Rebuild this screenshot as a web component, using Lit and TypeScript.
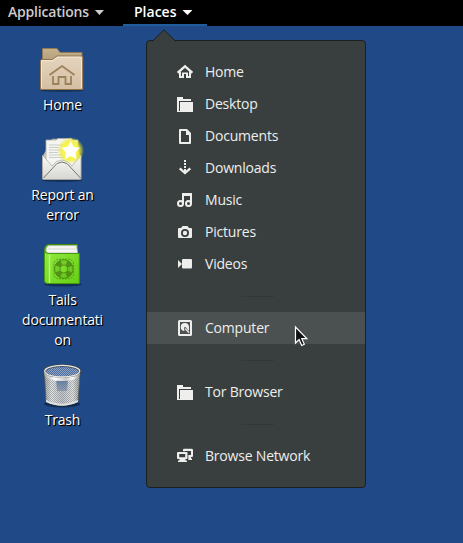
import { LitElement, html, svg, css } from "lit";
import { customElement, property } from "lit/decorators.js";
import { classMap } from "lit/directives/class-map.js";

const glyphs: Record<string, unknown> = {
  home: svg`<path d="M.6 8.800 8 2.300l7.400 6.500" fill="none" stroke="#eeeeec" stroke-width="2.200"/><path d="M2 8.500V14h5v-4h2v4h5V8.500l-2-1.500v5h-1V8.500H5V12H4V7z"/>`,
  folder: svg`<path d="M0 1h6v2h8v2H2v10H0z"/><path d="M3 6h13v10H0v-1h3z"/>`,
  document: svg`<path fill-rule="evenodd" d="M3 1h7l4 4v10q0 1-1 1H3q-1 0-1-1V2q0-1 1-1zM4 3v11h8V7H9V3z"/>`,
  download: svg`<path d="M7 0h2v2H7zM7 3h2v2H7zM7 6h2v2H7zM7 9h2v3H7z"/><path d="M2.700 8.300l5.300 4.700 5.300-4.700" fill="none" stroke="#eeeeec" stroke-width="2.300"/>`,
  music: svg`<path d="M5 1h10v11h-2V4H7v8H5z"/><circle cx="3.500" cy="11.500" r="2.500" fill="none" stroke="#eeeeec" stroke-width="2"/><circle cx="11.500" cy="11.500" r="2.500" fill="none" stroke="#eeeeec" stroke-width="2"/>`,
  camera: svg`<path fill-rule="evenodd" d="M2 4h2l1.500-2h5L12 4h2q1 0 1 1v8q0 1-1 1H2q-1 0-1-1V5q0-1 1-1zM8 5a4 4 0 1 0 0 8 4 4 0 0 0 0-8z"/><circle cx="8" cy="9" r="2.200"/>`,
  video: svg`<path d="M1 4l4 4-4 4z"/><rect x="5" y="3" width="10" height="9.500" rx="1"/>`,
  disk: svg`<path fill-rule="evenodd" d="M2.500 0h11Q15 0 15 1.500v13q0 1.500-1.500 1.500h-11Q1 16 1 14.500v-13Q1 0 2.500 0zM3 2v12h10V2z"/><path d="M8 3a4 4 0 1 0-.5 8L7 7.500 8.500 7l3.500 4V7.500A4 4 0 0 0 8 3z"/><path d="M8.300 8.500l3.700 4.200" fill="none" stroke="#eeeeec" stroke-width="1.300"/>`,
  network: svg`<path d="M7 .8h7.500Q16 .8 16 2v6q0 1-1 1h-1v1.500h1V12h-3.700V7H14V3H8v.200H6V2Q6 .8 7 .8z"/><path fill-rule="evenodd" d="M1 4h8.500q1 0 1 1v5q0 1-1 1H8.500v1.500H10V14H1v-1.500h1.500V11H1q-1 0-1-1V5q0-1 1-1zM2.200 6v3.200h6V6z"/>`,
};

const star = "M32.700 6 35.500 11.800 42 12.700 37.400 17.400 38.400 24 32.700 21 27 24 28 17.400 23.400 12.700 29.900 11.800z";

const pictures: Record<string, unknown> = {
  home: svg`
    <defs>
      <linearGradient id="hb" x2="0" y2="1"><stop stop-color="#c5b18d"/><stop offset="1" stop-color="#a8946e"/></linearGradient>
      <linearGradient id="hf" x2="0" y2="1"><stop stop-color="#e6d4be"/><stop offset="1" stop-color="#d4bfa3"/></linearGradient>
    </defs>
    <ellipse cx="24" cy="45.500" rx="22" ry="1.500" fill="#000" opacity=".3"/>
    <path d="M4.500 24V3.500H19l3 4h22V24z" fill="url(#hb)" stroke="#8f7a52"/>
    <path d="M2.500 44.500V16q0-1.500 1.500-1.500h10.500l4.500-3.500h24q1.700 0 1.700 1.500v32z" fill="url(#hf)" stroke="#8f7348"/>
    <path d="M3.500 43V15.700h11.500l4.500-3.500h24V43" fill="none" stroke="#f5eadb" stroke-width=".9"/>
    <path d="M11.500 30 24 21l12.500 9M15 31v8h5.500v-7h7v7H33v-8" fill="none" stroke="#9b805b" stroke-width="1.800"/>`,
  report: svg`
    <defs>
      <linearGradient id="ep" x2="0" y2="1"><stop stop-color="#fbfbf8"/><stop offset="1" stop-color="#d6d6d2"/></linearGradient>
      <radialGradient id="eg"><stop offset=".35" stop-color="#fff84a"/><stop offset=".7" stop-color="#f4ee22" stop-opacity=".75"/><stop offset="1" stop-color="#e6e82a" stop-opacity="0"/></radialGradient>
    </defs>
    <ellipse cx="24" cy="45.500" rx="20" ry="1.500" fill="#000" opacity=".35"/>
    <path d="M4.500 22 14 4h20l9 18v22H4.500z" fill="#d0d0cb" stroke="#8e8e88" stroke-width=".8"/>
    <path d="M8 5h10l2-1.500h13L35 5h5v34H8z" fill="#f5f5f1" stroke="#aaaaa4" stroke-width=".8"/>
    <path d="M11 10h13M11 12.500h10M11 15h12M11 17.500h9M11 20h13M11 22.500h15" stroke="#c2c2be" stroke-width=".8"/>
    <path d="M4.500 20 14 31q4-6 10-6t10 6l9-11v23q0 1.500-1.500 1.500H6q-1.500 0-1.500-1.500z" fill="url(#ep)" stroke="#a6a6a0" stroke-width=".7"/>
    <path d="M5.500 43 19 28.500q5-3 10 0L42.500 43" fill="none" stroke="#777772" stroke-width="1"/>
    <circle cx="32.700" cy="15.500" r="13.500" fill="url(#eg)"/>
    <path d="${star}" fill="#fff"/>`,
  book: svg`
    <defs>
      <linearGradient id="bk" x2="1" y2="1"><stop stop-color="#92ea40"/><stop offset="1" stop-color="#66cf14"/></linearGradient>
    </defs>
    <ellipse cx="25" cy="44.500" rx="19" ry="2" fill="#000" opacity=".35"/>
    <path d="M6.500 11Q6.500 4.500 11 4.500h28.500V40H6.500z" fill="#68c81a" stroke="#3f8d08"/>
    <path d="M8 11Q8 5.500 12 5.500h26.500l1.200 7.500H9z" fill="#f4f4f1" stroke="#a5aaa0" stroke-width=".6"/>
    <path d="M10 9h28" stroke="#d0d0cb" stroke-width=".7"/>
    <path d="M6.500 10q0 3.500 4 3.500h30.800v30H9.500q-3 0-3-3z" fill="url(#bk)" stroke="#459b0b"/>
    <path d="M11.500 14.500v28.500" stroke="#b8f77e" stroke-width="1.500"/>
    <g fill="none" stroke="#4c8b14">
      <circle cx="25.800" cy="29" r="6.800" stroke-width="5" opacity=".2"/>
      <circle cx="25.800" cy="29" r="6.800" stroke-width="5.500" stroke-dasharray="5.340 5.340" stroke-dashoffset="-2.670" opacity=".85"/>
      <circle cx="25.800" cy="29" r="4" stroke-width=".9"/>
      <circle cx="25.800" cy="29" r="9.300" stroke-width=".9"/>
      <rect x="16" y="19.200" width="19.600" height="19.600" rx="5" stroke-width=".8" stroke-dasharray="2 1"/>
    </g>`,
  trash: svg`
    <defs>
      <linearGradient id="tb"><stop stop-color="#a5a8a5"/><stop offset=".2" stop-color="#e6e7e4"/><stop offset=".5" stop-color="#c3c7cb"/><stop offset=".8" stop-color="#e8e8e5"/><stop offset="1" stop-color="#9a9c98"/></linearGradient>
      <pattern id="tm" width="2" height="2" patternUnits="userSpaceOnUse"><path d="M0 0h1v1H0zM1 1h1v1H1z" fill="#727a84"/></pattern>
      <pattern id="tl" width="2" height="2" patternUnits="userSpaceOnUse"><path d="M0 0h1v1H0zM1 1h1v1H1z" fill="#c0c8d2"/></pattern>
      <linearGradient id="tc" x2="0" y2="1"><stop stop-color="#2c5797" stop-opacity=".75"/><stop offset="1" stop-color="#5c7dac" stop-opacity=".5"/></linearGradient>
      <linearGradient id="tr"><stop stop-color="#a9aba7"/><stop offset=".3" stop-color="#fff"/><stop offset=".6" stop-color="#c9cac6"/><stop offset=".8" stop-color="#fafaf8"/><stop offset="1" stop-color="#8b8d89"/></linearGradient>
    </defs>
    <ellipse cx="24" cy="44" rx="18" ry="3.500" fill="#000" opacity=".4"/>
    <path d="M6.500 14 8 41.500q16 8 32 0L42 14z" fill="url(#tb)" stroke="#555753" stroke-width=".8"/>
    <path d="M18 18h12l-1 13H19z" fill="url(#tc)"/>
    <path d="M6.500 14 8 41.500q16 8 32 0L42 14z" fill="url(#tm)" opacity=".55"/>
    <path d="M8 40q16 7.500 32 0v2q-16 7.500-32 0z" fill="#e2e3e0"/>
    <ellipse cx="24.200" cy="11.500" rx="17.800" ry="6" fill="#4a6ea3" stroke="#444743" stroke-width="2.600"/>
    <ellipse cx="24.200" cy="12" rx="16.500" ry="4.800" fill="url(#tl)" opacity=".6"/>
    <ellipse cx="24.200" cy="11.200" rx="17.500" ry="5.800" fill="none" stroke="#e8e9e6" stroke-width="1.300"/>
    <path d="M6.300 12q2 5.500 17.900 5.500T42 12v3q-3 6-17.800 6T6.300 15z" fill="url(#tr)"/>`,
};

@customElement("desktop-icon")
class DesktopIcon extends LitElement {
  @property() picture = "";
  @property({ attribute: false }) lines: string[] = [];
  static styles = css`
    :host { display: flex; flex-direction: column; align-items: center; gap: 2px; }
    svg { display: block; width: 48px; height: 48px; }
    .label { padding-left: 1px; text-align: center; line-height: 20px; color: #fff; text-shadow: 1px 1px 0 #000, 1px 1px 1px #000; white-space: nowrap; }
    .line { display: block; }
  `;
  render() {
    return html`<svg viewBox="0 0 48 48">${pictures[this.picture]}</svg>
      <div class="label">${this.lines.map((l) => html`<span class="line">${l}</span>`)}</div>`;
  }
}

@customElement("place-item")
class PlaceItem extends LitElement {
  @property() icon = "";
  @property() label = "";
  @property({ type: Boolean }) active = false;
  static styles = css`
    :host { display: block; }
    .row { display: flex; align-items: center; gap: 12px; height: 32px; padding-left: 30px; color: #eeeeec; }
    .active { background: #4b5050; }
    svg { width: 16px; height: 16px; fill: #eeeeec; flex: none; }
  `;
  render() {
    return html`<div class=${classMap({ row: true, active: this.active })}>
      <svg viewBox="0 0 16 16">${glyphs[this.icon]}</svg><span>${this.label}</span>
    </div>`;
  }
}

@customElement("app-root")
class AppRoot extends LitElement {
  static styles = css`
    :host {
      display: block; position: relative; height: 543px; overflow: hidden;
      background: #204a87; font: 14px/20px "Open Sans", "Noto Sans", sans-serif; letter-spacing: -0.2px;
    }
    .bar { display: flex; gap: 19px; height: 26px; background: #000; color: #ccc; font-weight: 600; }
    .tab { box-sizing: border-box; display: flex; gap: 6px; height: 26px; line-height: 24px; width: 104px; padding-left: 8px; }
    .tab.open { width: 84px; padding-left: 11px; color: #fff; border-bottom: 2px solid #215d9c; letter-spacing: 0; }
    .arrow { width: 10px; height: 5px; margin-top: 10px; background: currentColor; clip-path: polygon(0 0, 100% 0, 50% 100%); }
    .icons { display: flex; flex-direction: column; width: 124px; padding-top: 19px; }
    .tight { margin-top: 10px; }
    .mid { margin-top: 15px; }
    .wide { margin-top: 20px; }
    .menu {
      position: absolute; left: 146px; top: 40px; width: 220px; height: 448px; box-sizing: border-box;
      padding: 15px 0; border: 1px solid #1c1f1f; border-radius: 4px; background: #393f3f;
    }
    .pointer { position: absolute; left: 4px; top: -12px; width: 26px; height: 13px; }
    .sep { display: flex; align-items: center; justify-content: center; height: 32px; }
    .sep::before { content: ""; width: 33px; height: 1px; margin-left: 2px; background: #323738; }
    .cursor { position: absolute; left: 294px; top: 325px; width: 14px; height: 22px; }
  `;
  render() {
    return html`
      <div class="bar">
        <div class="tab">Applications<span class="arrow"></span></div>
        <div class="tab open">Places<span class="arrow"></span></div>
      </div>
      <div class="icons">
        <desktop-icon picture="home" .lines=${["Home"]}></desktop-icon>
        <desktop-icon class="wide" picture="report" .lines=${["Report an", "error"]}></desktop-icon>
        <desktop-icon class="mid" picture="book" .lines=${["Tails", "documentati", "on"]}></desktop-icon>
        <desktop-icon class="tight" picture="trash" .lines=${["Trash"]}></desktop-icon>
      </div>
      <div class="menu">
        <svg class="pointer" viewBox="0 0 26 13"><path d="M1 12.500 13 1l12 11.500V13H1z" fill="#393f3f"/><path d="M1 12.500 13 .8l12 11.700" fill="none" stroke="#1c1f1f"/></svg>
        <place-item icon="home" label="Home"></place-item>
        <place-item icon="folder" label="Desktop"></place-item>
        <place-item icon="document" label="Documents"></place-item>
        <place-item icon="download" label="Downloads"></place-item>
        <place-item icon="music" label="Music"></place-item>
        <place-item icon="camera" label="Pictures"></place-item>
        <place-item icon="video" label="Videos"></place-item>
        <div class="sep"></div>
        <place-item icon="disk" label="Computer" active></place-item>
        <div class="sep"></div>
        <place-item icon="folder" label="Tor Browser"></place-item>
        <div class="sep"></div>
        <place-item icon="network" label="Browse Network"></place-item>
      </div>
      <svg class="cursor" viewBox="0 0 14 22"><path d="M1.500 2v16l3.600-3.500 2.600 6 2.600-1.200-2.500-5.600h5z" fill="#111" stroke="#fff" stroke-width="1.200"/></svg>`;
  }
}
